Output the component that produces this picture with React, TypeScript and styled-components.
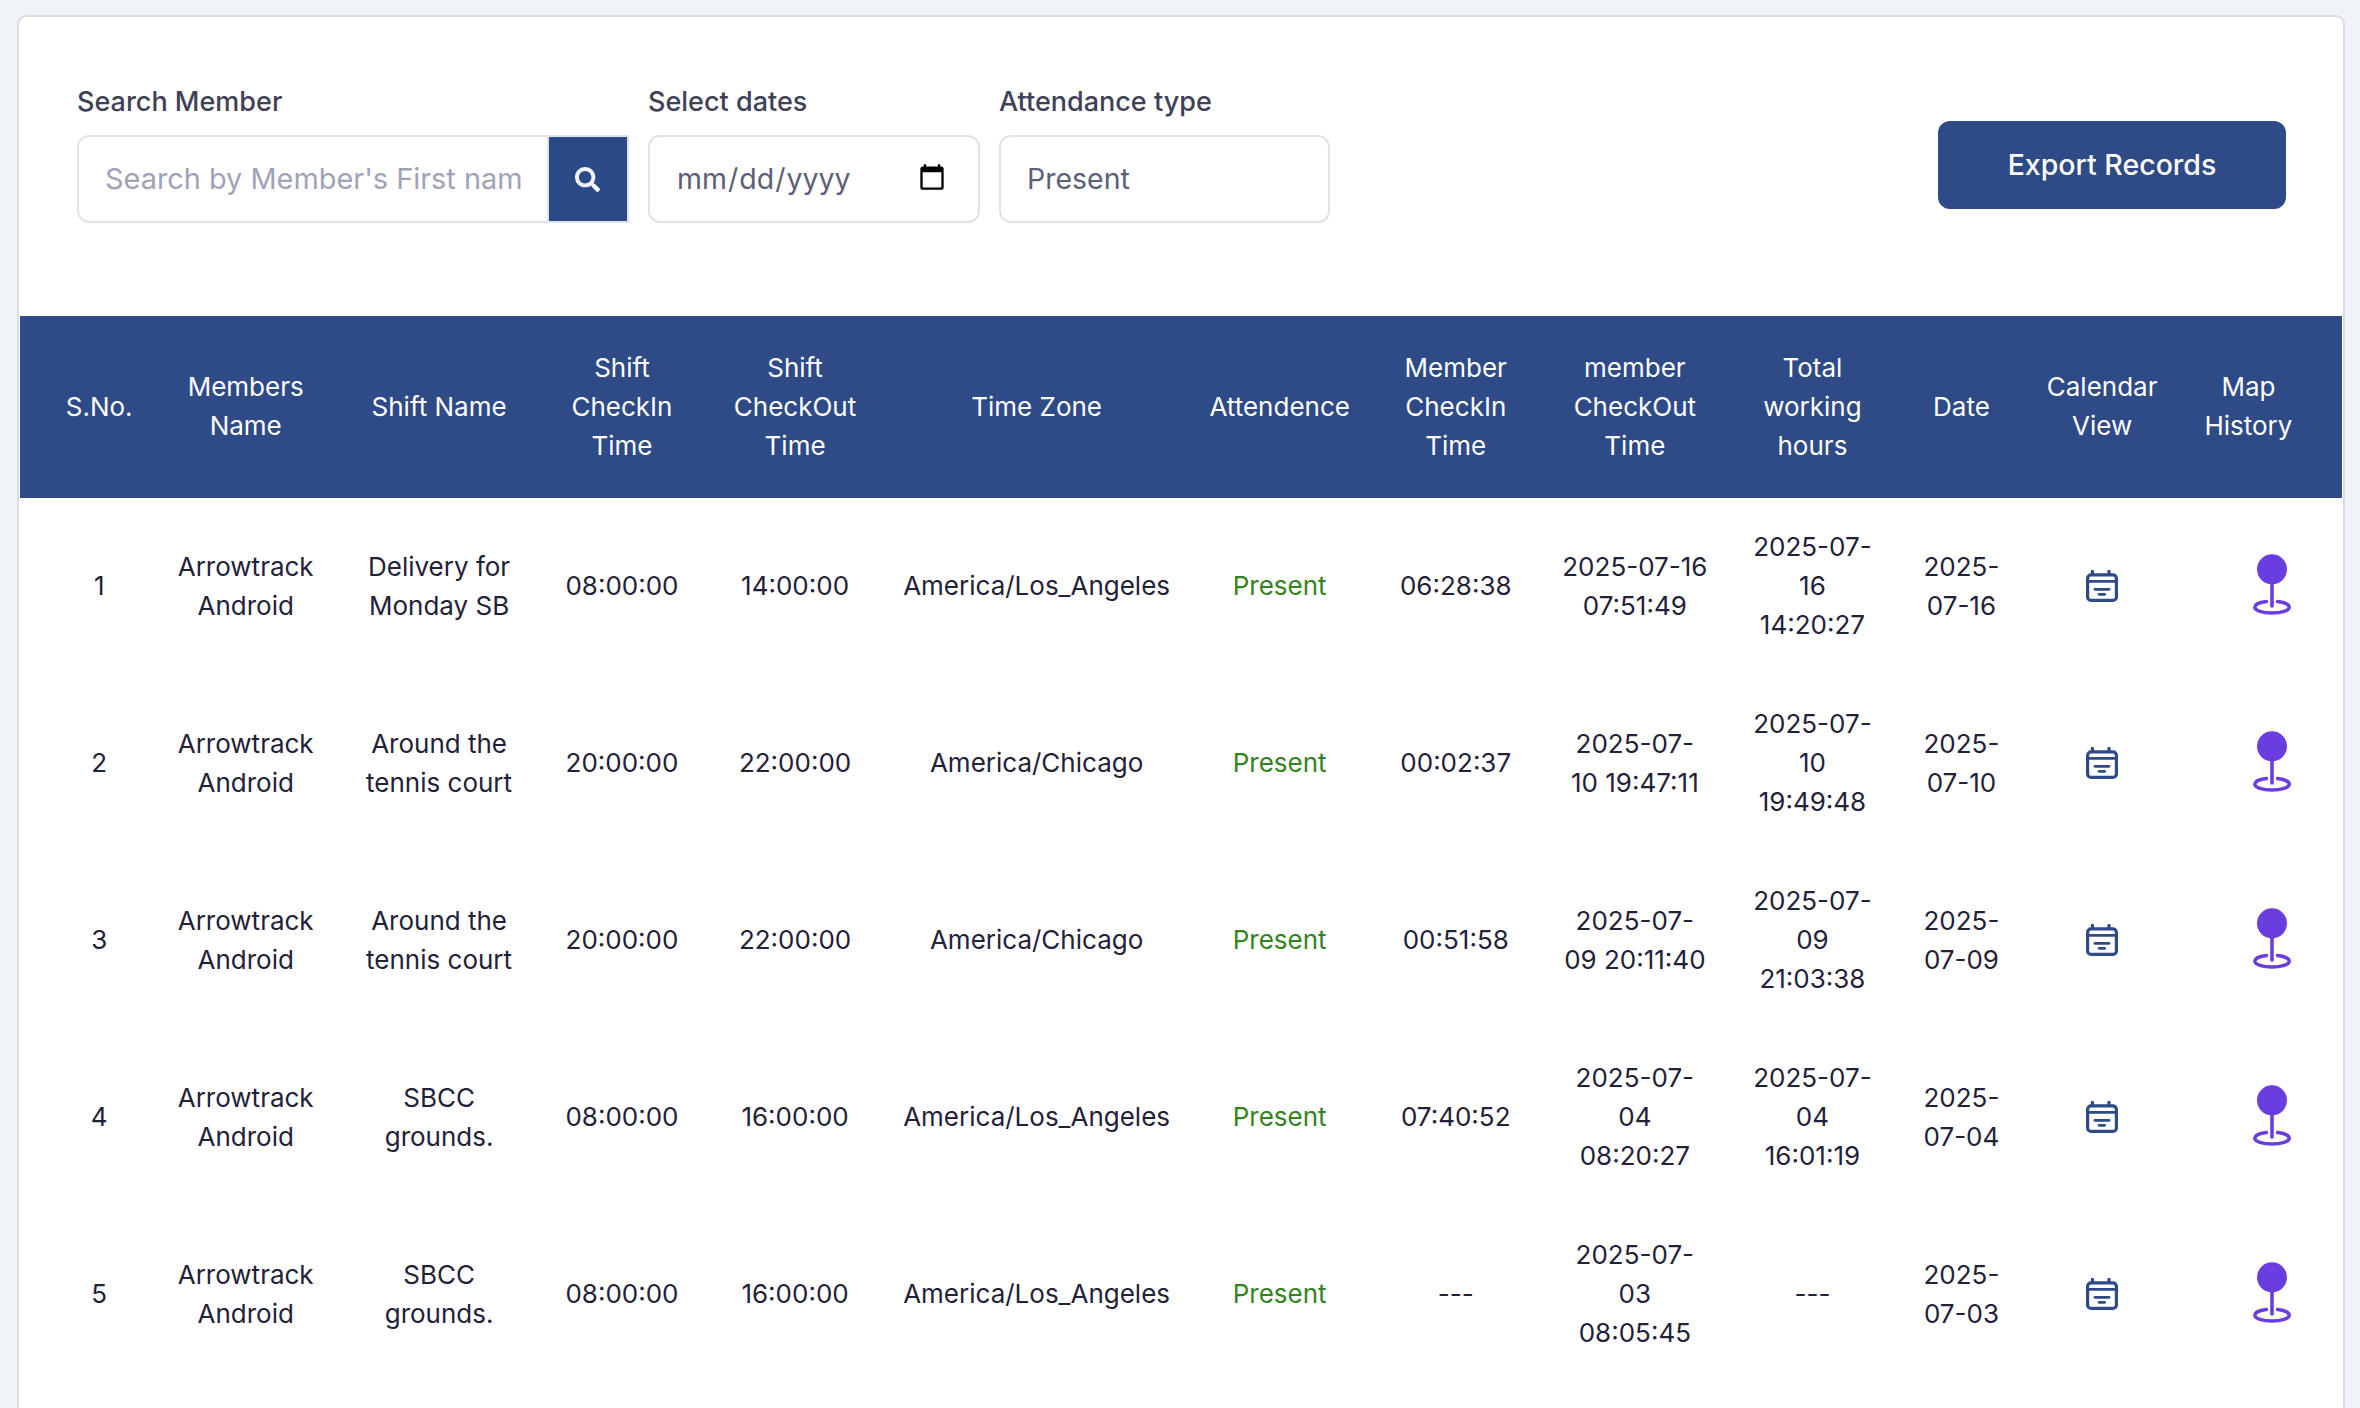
import React from 'react'
import styled, { createGlobalStyle } from 'styled-components'
import { FaSearch } from 'react-icons/fa'

const GlobalStyle = createGlobalStyle`
	html, body {
		margin: 0;
		height: 100%;
		overflow: hidden;
		background: #f0f4f9;
		font-family: Inter, 'Liberation Sans', sans-serif;
	}
	* {
		box-sizing: border-box;
	}
`

const Page = styled.main`
	padding: 15px 15px 0 16.5px;
`

const Card = styled.section`
	background: #ffffff;
	border: 2px solid #dcdde4;
	border-bottom: none;
	border-radius: 9px 9px 0 0;
	height: calc(100vh - 15px);
`

const FilterBar = styled.div`
	height: 299px;
	padding: 0 57px 0 58.5px;
	display: flex;
	justify-content: space-between;
	align-items: center;
`

const Filters = styled.div`
	display: flex;
	gap: 19.5px;
	padding-bottom: 25px;
`

const Field = styled.label`
	display: flex;
	flex-direction: column;
	gap: 16px;
`

const FieldLabel = styled.span`
	font-size: 27px;
	line-height: 34px;
	font-weight: 500;
	color: #3f4156;
`

const InputBox = styled.div<{ $width: number; $square?: boolean }>`
	width: ${p => p.$width}px;
	height: 88px;
	display: flex;
	border: 2px solid #e2e3ea;
	border-radius: ${p => (p.$square ? '12px 0 0 12px' : '12px')};
	overflow: hidden;
	background: #fff;
`

const TextInput = styled.input`
	flex: 1;
	min-width: 0;
	height: 100%;
	border: none;
	outline: none;
	padding: 0 26px 2px;
	background: transparent;
	font: 400 28.5px Inter, sans-serif;
	color: #5c5f78;

	&::placeholder {
		color: #a0a3b8;
		opacity: 1;
		font-size: 28.9px;
	}

	&::-webkit-calendar-picker-indicator {
		margin: 0 5px 0 0;
		width: 30px;
		height: 30px;
		padding: 0;
	}
`

const SearchInput = styled(TextInput)`
	padding-right: 25px;
`

const SearchButton = styled.button`
	width: 80px;
	border: none;
	border-left: 2px solid #e2e3ea;
	padding: 0;
	display: flex;
	align-items: center;
	justify-content: center;
	background: #2c4a87;
	color: #f2f4f8;
	font-size: 25px;
`

const ExportButton = styled.button`
	width: 348px;
	height: 88px;
	margin-bottom: 4px;
	border: none;
	border-radius: 12px;
	background: #2e4a87;
	color: #ffffff;
	font: 500 28.5px Inter, sans-serif;
`

const TableWrap = styled.div`
	padding: 0 1.5px;
`

const Table = styled.table`
	width: 100%;
	table-layout: fixed;
	border-collapse: collapse;
	font-size: 26px;
	line-height: 39px;
	text-align: center;
`

const HeadRow = styled.tr`
	background: #2e4a87;
	color: #ffffff;
	height: 182px;
`

const HeadCell = styled.th<{ $left?: number; $right?: number }>`
	font-weight: 400;
	padding: 0 ${p => p.$right ?? 14}px 2px ${p => p.$left ?? 14}px;
`

const BodyRow = styled.tr`
	height: 177px;
	color: #1f2238;
`

const Cell = styled.td<{ $left?: number; $right?: number }>`
	padding: 0 ${p => p.$right ?? 14}px 1.5px ${p => p.$left ?? 14}px;
`

const StatusCell = styled(Cell)`
	color: #338321;
`

const IconWrap = styled.div<{ $top?: number }>`
	display: flex;
	justify-content: center;
	align-items: center;
	padding-top: ${p => p.$top ?? 0}px;
`

const colWidths = [132.4, 186.6, 200.2, 165.6, 180.6, 302.5, 183.6, 168.6, 189.6, 165.6, 132.4, 149, 165.6]

const rows = [
	{ no: 1, shift: 'Delivery for Monday SB', inTime: '08:00:00', outTime: '14:00:00', zone: 'America/Los_Angeles', checkIn: '06:28:38', checkOut: '2025-07-16 07:51:49', total: '2025-07-16 14:20:27', date: '2025-07-16' },
	{ no: 2, shift: 'Around the tennis court', inTime: '20:00:00', outTime: '22:00:00', zone: 'America/Chicago', checkIn: '00:02:37', checkOut: '2025-07-10 19:47:11', total: '2025-07-10 19:49:48', date: '2025-07-10' },
	{ no: 3, shift: 'Around the tennis court', inTime: '20:00:00', outTime: '22:00:00', zone: 'America/Chicago', checkIn: '00:51:58', checkOut: '2025-07-09 20:11:40', total: '2025-07-09 21:03:38', date: '2025-07-09' },
	{ no: 4, shift: 'SBCC grounds.', inTime: '08:00:00', outTime: '16:00:00', zone: 'America/Los_Angeles', checkIn: '07:40:52', checkOut: '2025-07-04 08:20:27', total: '2025-07-04 16:01:19', date: '2025-07-04' },
	{ no: 5, shift: 'SBCC grounds.', inTime: '08:00:00', outTime: '16:00:00', zone: 'America/Los_Angeles', checkIn: '---', checkOut: '2025-07-03 08:05:45', total: '---', date: '2025-07-03' },
]

const CalendarIcon = () => (
	<svg width={32} height={32} viewBox="0 0 32 32" fill="none" stroke="#2e4a87" strokeLinecap="round">
		<rect x={1.6} y={4.8} width={28.8} height={25.6} rx={3.5} strokeWidth={3.2} />
		<path d="M2 11.3H30" strokeWidth={2.8} />
		<path d="M6.4 1.4V4.5M23 1.4V4.5" strokeWidth={3.2} />
		<path d="M9 19.3H23" strokeWidth={2.8} />
		<path d="M13.2 24.3H18.6" strokeWidth={2.8} />
	</svg>
)

const PinIcon = () => (
	<svg width={38} height={66} viewBox="0 0 38 66" fill="none" stroke="#6a3de0">
		<circle cx={19} cy={15.3} r={15} fill="#6a3de0" stroke="none" />
		<path d="M19 28V52" strokeWidth={3.6} strokeLinecap="round" />
		<path d="M13.5 47.6C6.5 48.4 1.8 50.6 1.8 53.2C1.8 56.4 9.5 59 19 59C28.5 59 36.2 56.4 36.2 53.2C36.2 50.6 31.5 48.4 24.5 47.6" strokeWidth={3.5} strokeLinecap="round" />
	</svg>
)

const App = () => (
	<Page>
		<GlobalStyle />
		<Card>
			<FilterBar>
				<Filters>
					<Field>
						<FieldLabel>Search Member</FieldLabel>
						<InputBox $width={551.5} $square>
							<SearchInput placeholder="Search by Member's First name" />
							<SearchButton type="button"><FaSearch /></SearchButton>
						</InputBox>
					</Field>
					<Field>
						<FieldLabel>Select dates</FieldLabel>
						<InputBox $width={331.5}>
							<TextInput type="date" />
						</InputBox>
					</Field>
					<Field>
						<FieldLabel>Attendance type</FieldLabel>
						<InputBox $width={330.5}>
							<TextInput readOnly value="Present" />
						</InputBox>
					</Field>
				</Filters>
				<ExportButton type="button">Export Records</ExportButton>
			</FilterBar>
			<TableWrap>
				<Table>
					<colgroup>
						{colWidths.map((w, i) => <col key={i} style={{ width: w }} />)}
					</colgroup>
					<thead>
						<HeadRow>
							<HeadCell $left={40}>S.No.</HeadCell>
							<HeadCell>Members Name</HeadCell>
							<HeadCell>Shift Name</HeadCell>
							<HeadCell>Shift CheckIn Time</HeadCell>
							<HeadCell>Shift CheckOut Time</HeadCell>
							<HeadCell>Time Zone</HeadCell>
							<HeadCell>Attendence</HeadCell>
							<HeadCell>Member CheckIn Time</HeadCell>
							<HeadCell $left={22} $right={22}>member CheckOut Time</HeadCell>
							<HeadCell>Total working hours</HeadCell>
							<HeadCell>Date</HeadCell>
							<HeadCell>Calendar View</HeadCell>
							<HeadCell $right={36}>Map History</HeadCell>
						</HeadRow>
					</thead>
					<tbody>
						{rows.map(r => (
							<BodyRow key={r.no}>
								<Cell $left={40}>{r.no}</Cell>
								<Cell>Arrowtrack Android</Cell>
								<Cell>{r.shift}</Cell>
								<Cell>{r.inTime}</Cell>
								<Cell>{r.outTime}</Cell>
								<Cell>{r.zone}</Cell>
								<StatusCell>Present</StatusCell>
								<Cell>{r.checkIn}</Cell>
								<Cell $left={22.15} $right={22.15}>{r.checkOut}</Cell>
								<Cell $left={17} $right={17}>{r.total}</Cell>
								<Cell>{r.date}</Cell>
								<Cell $right={14.5}><IconWrap><CalendarIcon /></IconWrap></Cell>
								<Cell $left={26} $right={0}><IconWrap $top={1.5}><PinIcon /></IconWrap></Cell>
							</BodyRow>
						))}
					</tbody>
				</Table>
			</TableWrap>
		</Card>
	</Page>
)

export default App
